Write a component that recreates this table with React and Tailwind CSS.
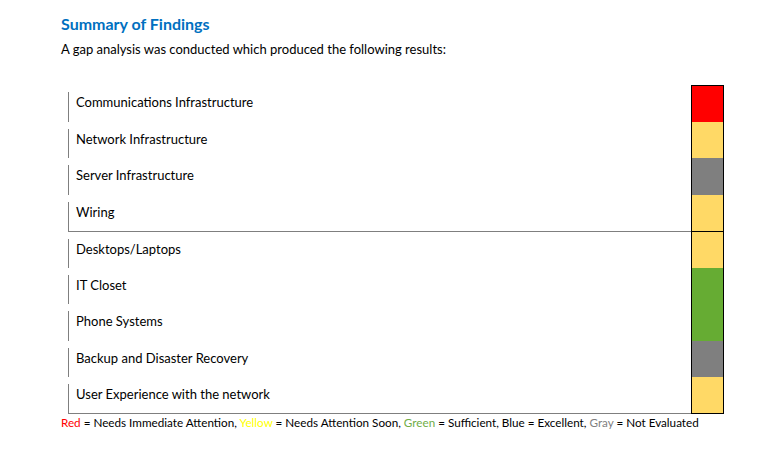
export default function App() {
  const rows = [
    ["Communications Infrastructure", "bg-[#ff0000]"],
    ["Network Infrastructure", "bg-[#ffd966]"],
    ["Server Infrastructure", "bg-[#7f7f7f]"],
    ["Wiring", "bg-[#ffd966]"],
    ["Desktops/Laptops", "bg-[#ffd966]"],
    ["IT Closet", "bg-[#66ac33]"],
    ["Phone Systems", "bg-[#66ac33]"],
    ["Backup and Disaster Recovery", "bg-[#7f7f7f]"],
    ["User Experience with the network", "bg-[#ffd966]"],
  ];
  return (
    <div className="w-[771px] h-[451px] bg-white text-black font-['Lato',sans-serif] pl-[61px] pt-[14px] overflow-hidden">
      <h1 className="text-[16px] font-bold text-[#0070c0] leading-[20px]">Summary of Findings</h1>
      <p className="text-[13px] leading-[16px] mt-[7px]">A gap analysis was conducted which produced the following results:</p>
      <div className="ml-[7px] mt-[28px] w-[656px]">
        {rows.map(([label, color], i) => (
          <div key={i} className="flex h-[36.56px]">
            <div className={`flex-1 pt-[7px] ${i === 4 ? "border-t border-[#7f7f7f]" : ""}`}>
              <div className="border-l border-[#7f7f7f] h-full pl-[7px] flex items-start">
                <span className="text-[13px] leading-[16px] mt-[2px]">{label}</span>
              </div>
            </div>
            <div
              className={`w-[33px] border-x border-black ${color} ${i === 0 || i === 4 ? "border-t" : ""} ${
                i === 8 ? "border-b" : ""
              }`}
            />
          </div>
        ))}
        <div className="h-px bg-[#7f7f7f] mr-[33px] -mt-px" />
      </div>
      <p className="text-[11.7px] leading-[14px] mt-[1px]">
        <span className="text-[#ff0000]">Red</span> = Needs Immediate Attention,{" "}
        <span className="text-[#ffff00]">Yellow</span> = Needs Attention Soon,{" "}
        <span className="text-[#70ad47]">Green</span> = Sufficient, Blue = Excellent,{" "}
        <span className="text-[#7f7f7f]">Gray</span> = Not Evaluated
      </p>
    </div>
  );
}
